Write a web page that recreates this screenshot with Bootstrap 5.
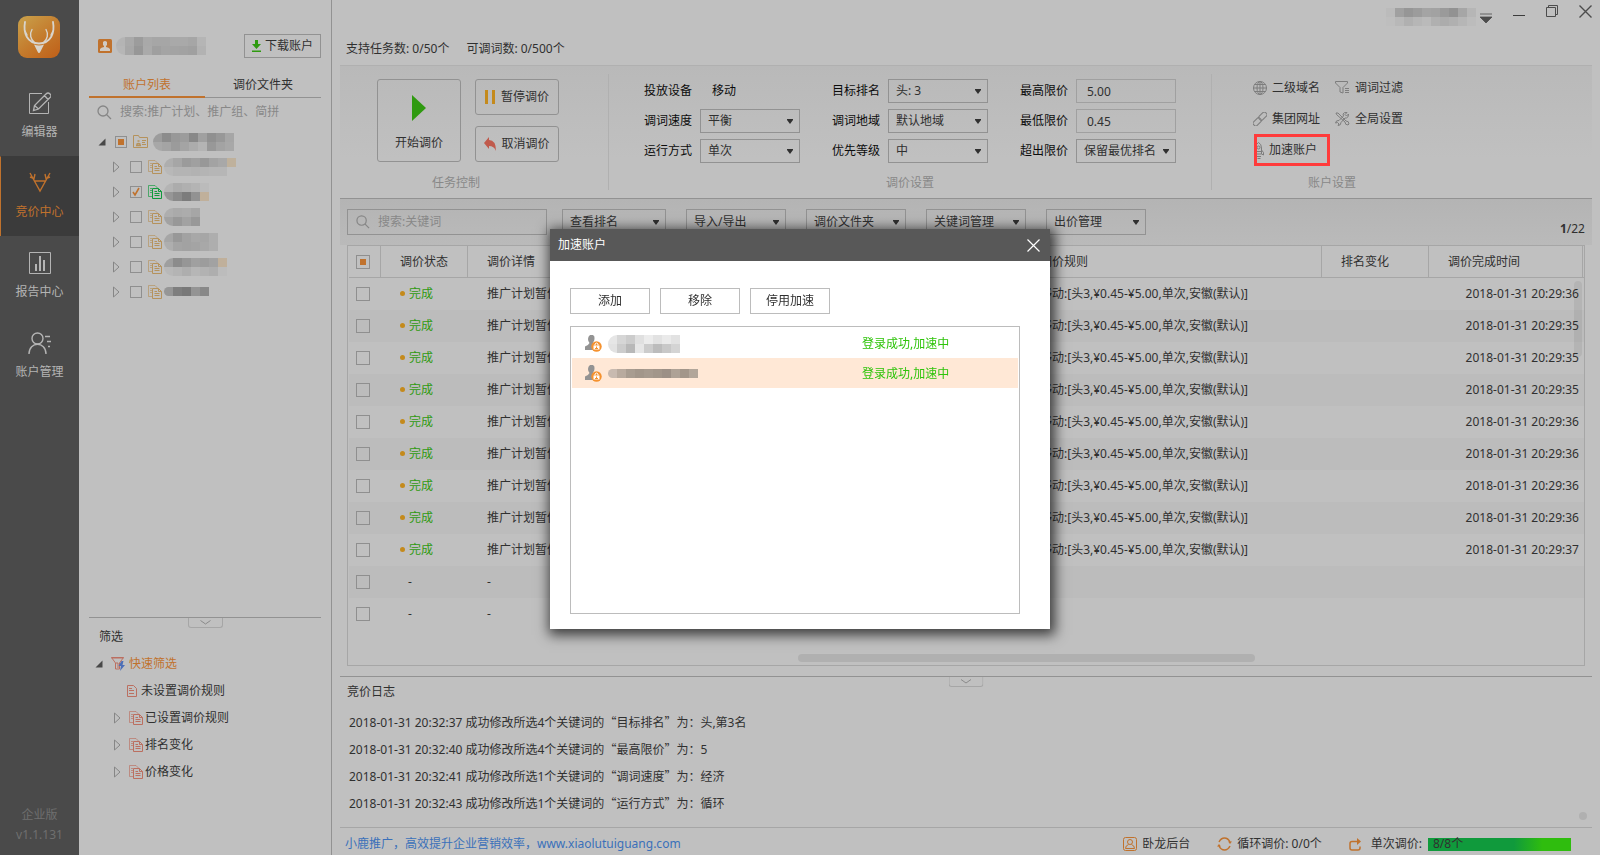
<!DOCTYPE html>
<html lang="zh-CN">
<head>
<meta charset="utf-8">
<meta name="viewport" content="width=device-width, initial-scale=1">
<title>竞价中心</title>
<link href="https://cdn.jsdelivr.net/npm/bootstrap@5.3.0/dist/css/bootstrap.min.css" rel="stylesheet">
<style>
:root{--bg:#c0c0c0;--line:#929292;--soft:#a6a6a6;--ink:#303030;--mute:#868686;--accent:#c0722d;--ok:#2f9a10}
body{font:12px/18px "Noto Sans","Noto Sans CJK SC",sans-serif;background:var(--bg);color:var(--ink)}
svg{display:block;flex:none}
svg.ln{fill:none;stroke:currentColor}
a{color:inherit;text-decoration:none}
button{font:inherit;color:inherit;background:none;border:0;padding:0}
.app{min-height:100vh}
/* left navigation */
.rail{flex:0 0 79px;background:#4a4a4a;color:#b4b4b4}
.rail-logo{height:76px;padding:16px 0 0 18px}
.rail a{height:80px;padding-top:15px;gap:7px;border:solid transparent;border-width:1px 1px 0 1px}
.rail a.on{background:#3b3b3b;color:var(--accent);border-left-color:var(--accent)}
.rail a .ic{height:24px}
.rail-ver{color:#6f6f6f;line-height:20px;padding-bottom:10px}
/* account panel */
.side{flex:0 0 253px;border-right:1px solid var(--line)}
.side-head{padding:34px 10px 0 19px}
.dl{width:77px;height:24px;border:1px solid var(--line)}
.side-tabs{margin:18px 10px 0 10px;border-bottom:1px solid var(--line)}
.side-tabs button{flex:1;height:22px;line-height:18px;padding-bottom:3px;border-bottom:2px solid transparent;margin-bottom:-1px}
.side-tabs button.on{color:var(--accent);border-color:var(--accent)}
.find{color:var(--mute);gap:8px}
.find input{background:none;border:0;padding:0;flex:1;min-width:0;outline:0;color:var(--ink)}
.find input::placeholder{color:#888;opacity:1}
.side .find{height:28px;margin:0 10px 3px 18px}
.tree{padding-left:19px}
.tree li{height:25px}
.tree li>*{flex:none}
.tree .kid{padding-left:15px}
.tree .tw{width:17px}
.chk{appearance:none;margin:0;width:12px;height:12px;border:1px solid #8f8f8f;background:none no-repeat center;display:block}
.chk.big{width:14px;height:14px}
.chk.part{background-image:linear-gradient(var(--accent),var(--accent));background-size:6px 6px}
.chk:checked{background-image:url("data:image/svg+xml,%3Csvg xmlns='http://www.w3.org/2000/svg' width='10' height='10'%3E%3Cpath d='M2 5l2 3 4-7' fill='none' stroke='%23c0722d' stroke-width='1.6'/%3E%3C/svg%3E")}
.tree .ic{width:15px;margin:0 1px 0 6px}
.tan{color:#b5925c}.grn{color:#109a3c}.red{color:#bb6f60}
.filters{margin-bottom:70px}
.split{border-top:1px solid var(--line)}
.side .split{margin:0 10px}
.grip{width:35px;height:10px;border:1px solid var(--soft);border-top:0;border-radius:0 0 3px 3px;color:var(--soft)}
.quick{padding-left:16px}
.quick li{height:27px}
.quick .kid{padding-left:19px}
.quick .top{color:var(--accent);gap:4px}
.quick .leaf{padding-left:32px}
/* work area */
.work{min-width:0;padding:0 8px}
.titlebar{height:40px;padding-top:5px;color:#4c4c4c}
.titlebar .names{margin:3px 4px 0 0}
.titlebar button+button{margin-left:21px}
.counts{height:25px;padding-left:6px;gap:17px}
.ribbon{border-top:1px solid #b0b0b0;border-bottom:1px solid var(--line);background:linear-gradient(#b9b9b9,#c0c0c0 70%);padding:8px 0}
.grp{height:116px;padding-top:5px}
.grp+.grp{border-left:1px solid #b0b0b0}
.g-task{flex:0 0 268px;padding-left:37px}
.g-task .pads{gap:14px}
.g-set{flex:0 0 603px}
.g-set .sets{gap:32px;padding-left:35px}
.grp .cap{color:#888;line-height:14px}
.g-task .cap{padding-left:55px}
.g-acc .cap{padding-left:96px}
.rb{border:1px solid var(--line);border-radius:3px;width:84px;height:36px;gap:5px}
.rb.tall{height:83px;gap:13px;padding-top:6px}
.fields{display:grid;grid-template-columns:56px 100px;grid-auto-rows:24px;row-gap:6px;align-items:center;color:#0c0c0c}
.fields select,.fields input{width:100px;height:24px;border:1px solid var(--line);border-radius:0;background-color:transparent;color:var(--ink);padding:0 0 0 7px;outline:0}
.fields input{padding-left:10px;border-color:#a0a0a0}
.fields select{appearance:none}
.caret,.fields select{background-image:url("data:image/svg+xml,%3Csvg xmlns='http://www.w3.org/2000/svg' width='6' height='5'%3E%3Cpath d='M0 0h6v1L3 5 0 1z' fill='%23303030'/%3E%3C/svg%3E");background-repeat:no-repeat;background-position:right 6px center}
.tools{display:grid;grid-template-columns:82px 82px;grid-auto-rows:31px;margin:-2px 0 0 41px}
.tools a{gap:5px}
.tools svg{color:#7d7d7d}
.tools .hot{outline:3px solid #ff3b3b;outline-offset:-3px;width:76px;height:32px;margin-left:1px;gap:5px}
.bar{height:46px;padding:10px 7px;background:linear-gradient(#b4b4b4,#bababa);gap:20px}
.bar .find{width:200px;height:26px;border:1px solid var(--line);padding-left:8px;margin-right:-5px}
.bar .drop{width:100px;height:26px;border:1px solid var(--line);text-align:left;padding-left:7px}
.bar .drop.first{width:104px}
.bar .pos{margin-bottom:-3px}
.gridwrap{margin:0 7px 10px;border:1px solid var(--soft)}
.gridbox{margin-left:1px}
.kw{table-layout:fixed;width:100%;border-collapse:separate;border-spacing:0}
.kw th{height:32px;font-weight:400;border:solid var(--soft);border-width:0 1px 1px 0;padding:0 0 0 19px}
.kw td{height:32px;padding:0 0 0 19px;white-space:nowrap;overflow:hidden}
.kw tr>:first-child{padding-left:7px}
.kw tr>.rule{padding-left:12px}
.kw tr>:last-child{padding:0}
.kw th:last-child{border-right:0}
.kw tbody tr:nth-child(even){background:#bcbcbc}
.kw .t{text-align:right;padding-right:4px}
.dot{display:inline-block;width:5px;height:5px;border-radius:50%;background:#c48a1c;vertical-align:2px;margin-right:4px}
.vthumb{top:35px;right:2px;width:8px;height:76px;border-radius:4px;background:#0000000f}
.hthumb{left:36.4%;bottom:3px;width:37%;height:8px;border-radius:4px;background:#b0b0b0}
.log{height:151px}
.log h2{font-size:12px;line-height:18px;margin:6px 0 7px 7px;font-weight:400}
.log li{height:27px;line-height:27px;padding-left:9px}
.log q{quotes:none;font-family:"Noto Sans CJK SC",sans-serif}
.log .knob{right:5px;bottom:7px;width:8px;height:8px;border-radius:50%;background:#b0b0b0}
.foot{height:28px;border-top:1px solid var(--soft);padding:5px 21px 0 5px}
.foot .lnk{color:#3a70ba}
.foot svg{color:var(--accent)}
.foot .cell{gap:5px;margin-right:27px}
.foot .cell.last{gap:9px;margin-right:6px}
.meter{width:143px;height:13px;background:linear-gradient(90deg,#109a3c 60%,#2fbd0e 80%)}
.meter span{padding-left:5px}
/* dialog */
.veil{position:fixed;inset:0;padding-top:3px;pointer-events:none}
.dlg{width:500px;background:#fff;box-shadow:2px 3px 12px 3px #000000b0;pointer-events:auto}
.dlg header{height:32px;background:#585858;color:#fff;padding:0 10px 0 8px}
.dlg .acts{gap:10px;padding:27px 20px 12px}
.dlg .acts button{width:80px;height:26px;border:1px solid #bcbcbc}
.accs{height:288px;border:1px solid #bcbcbc;margin:0 30px 15px 20px;padding:1px}
.accs li{height:30px;padding:1px 0 0 13px;gap:6px}
.accs li.on{background:#ffe8d6}
.accs .st{width:156px;color:#2ec40a}
</style>
</head>
<body>
<svg width="0" height="0" class="position-absolute" aria-hidden="true">
<symbol id="docs" viewBox="0 0 14 14"><g fill="none" stroke="currentColor"><path d="M4 11.500H.5V.5H7L9.500 3" opacity=".65"/><path d="M2 3.500h2M2 5.500h2M2 7.500h2" opacity=".65"/><path d="M4.500 3.500h6l3 3v7h-9zM10.500 3.500v3h3M6.500 6.500h2.500M6.500 8.500h5M6.500 10.500h5"/></g></symbol>
<symbol id="tri" viewBox="0 0 7 12"><path d="M.5 1v10L6 6z" fill="none" stroke="#868686"/></symbol>
<symbol id="open" viewBox="0 0 8 8"><path d="M7.500.5v7H.5z" fill="#484848"/></symbol>
<symbol id="lens" viewBox="0 0 15 15"><g fill="none" stroke="#868686" stroke-width="1.300"><circle cx="6" cy="6" r="5"/><path d="M9.500 9.500l4.500 4.500"/></g></symbol>
<symbol id="down" viewBox="0 0 11 5"><path d="M.5.5l5 3.500 5-3.500" fill="none" stroke="#8a8a8a"/></symbol>
<symbol id="user" viewBox="0 0 17 17"><path d="M5 0h3q2 1 1.500 4-.3 2.500-1.500 3.500 0 1.500 3 2.500v5H0v-3.500Q3.500 10 4.500 8 3 6.500 3 4T5 0" fill="#939393"/><circle cx="11.500" cy="11.500" r="5.200" fill="#f5922f"/><path d="M8.500 10.500h6v4h-6z" fill="#fff"/><path d="M10 10.500V9q1.500-2 3 0v1.500" fill="none" stroke="#fff"/><path d="M11.500 11.500v2M10 13.500h3" stroke="#f5922f"/></symbol>
</svg>

<div class="app d-flex">
<nav class="rail d-flex flex-column">
  <div class="rail-logo"><svg width="42" height="42" viewBox="0 0 42 42"><defs><linearGradient id="lg" x2=".8" y2="1"><stop stop-color="#c9a24c"/><stop offset=".6" stop-color="#c47a2c"/><stop offset="1" stop-color="#c0641c"/></linearGradient></defs><rect width="42" height="42" rx="9" fill="url(#lg)"/><g fill="none" stroke="#d8d4cc" stroke-width="1.800" stroke-linecap="round"><path d="M7 6C5 17 9 27 21 27.500 33 27 37 17 35 6"/><path d="M14 13.500c-3 5-1 10 2 12.500M28 13.500c3 5 1 10-2 12.500M7 15l2 4M35 15l-2 4" stroke-width="1.400"/></g><path d="M16 28.500q5 2 10 0l-3.500 7q-1.500 3-3 0z" fill="#d8d4cc"/></svg></div>
  <a href="#" class="d-flex flex-column align-items-center"><span class="ic"><svg class="ln" width="22" height="23" viewBox="0 0 22 23" stroke-width="1"><path d="M13 1.500H.5v20h19V10"/><path d="M4.500 18.500l1-5L17 2q2-2 4 0t0 3.500L9.500 17zM5.500 13.500l4 3.500M15.500 3.500l3.500 4" stroke-width="1.300"/></svg></span>编辑器</a>
  <a href="#" class="on d-flex flex-column align-items-center"><span class="ic"><svg class="ln" width="22" height="21" viewBox="0 0 22 21" stroke-width="1.400"><path d="M1 1l10 18L21 1M5.500 9h11M1 5l4 1.500 1-4.500M21 5l-4 1.500L16 2"/></svg></span>竞价中心</a>
  <a href="#" class="d-flex flex-column align-items-center"><span class="ic"><svg class="ln" width="22" height="22" viewBox="0 0 22 22"><path d="M.5.5h21v21H.5z"/><path d="M7 12v7M11 4v15M15 8v11" stroke-width="2"/></svg></span>报告中心</a>
  <a href="#" class="d-flex flex-column align-items-center"><span class="ic"><svg class="ln" width="23" height="23" viewBox="0 0 23 23" stroke-width="1.400"><circle cx="9.500" cy="6.500" r="5.500"/><path d="M1 22c0-13 17-13 17 0M17 4.500h5M19 9.500h4M20 14.500h2"/></svg></span>账户管理</a>
  <div class="rail-ver mt-auto text-center">企业版<br>v1.1.131</div>
</nav>

<aside class="side d-flex flex-column">
  <div class="side-head d-flex justify-content-between align-items-center">
    <div class="d-flex align-items-center gap-1"><svg width="14" height="14" viewBox="0 0 14 14"><rect width="14" height="14" rx="1.500" fill="#c0722d"/><path d="M5 3q2-2 4 0 .5 3-1 4v1q3 .5 4 2v2H2v-2q1-1.500 4-2V7Q4.500 6 5 3" fill="#d0cbc4"/></svg>
    <span data-mosaic="b4 a9 9c a9 a6 a6 a9 a9 a6 b5/b6 a7 97 aa 9f a4 a3 a2 a0 b2" data-round="1"></span></div>
    <button class="dl d-flex align-items-center justify-content-center gap-1"><svg width="9" height="12" viewBox="0 0 9 12"><path d="M3 0h3v4h3L4.500 9 0 4h3zM0 10.500h9V12H0z" fill="#2f9a10"/></svg>下载账户</button>
  </div>
  <div class="side-tabs d-flex"><button class="on">账户列表</button><button>调价文件夹</button></div>
  <label class="find d-flex align-items-center"><svg width="15" height="15"><use href="#lens"/></svg><input type="text" placeholder="搜索:推广计划、推广组、简拼" aria-label="搜索账户"></label>
  <ul class="tree list-unstyled mb-0" id="tree">
    <li class="d-flex align-items-center"><span class="tw"><svg width="8" height="8"><use href="#open"/></svg></span><input type="checkbox" class="chk part" aria-label="全部账户"><span class="ic tan"><svg class="ln" width="15" height="13" viewBox="0 0 15 13"><path d="M.5.500h5l1 2h8v10H.5zM9 5.500h4M9 7.500h3M9 9.500h4"/><path d="M3 10.500h5M3.500 9.500q2-2 4 0M4.500 6h2" stroke-width="1.500"/></svg></span><span class="ms-1" data-mosaic="9c 8c 98 9c 88 a0 90 98 a6/a8 a4 9b a4 ac b4 98 a3 a8" data-round="1"></span></li>
  </ul>
  <div class="filters mt-auto">
    <div class="split d-flex justify-content-center"><button class="grip d-flex align-items-center justify-content-center" aria-label="收起"><svg width="11" height="5"><use href="#down"/></svg></button></div>
    <div class="ps-3 ms-1 pb-1" id="quickhead">筛选</div>
    <ul class="quick list-unstyled mb-0" id="quick">
      <li class="top d-flex align-items-center"><svg width="8" height="8" class="me-1"><use href="#open"/></svg><svg width="14" height="14" viewBox="0 0 14 14"><path d="M.5.500h12l-4 5.500v6h-4V6z" fill="none" stroke="#bb6f60"/><path d="M.5 1h12M5 6h2v5" fill="none" stroke="#bb6f60"/><path d="M10.500 4L7.500 9h2.500l-1 5 5-6h-2.500l1-4z" fill="#4c6fb8"/></svg>快速筛选</li>
      <li class="leaf d-flex align-items-center"><svg class="ln red me-1" width="10" height="12" viewBox="0 0 10 12"><path d="M.5.500h6l3 3v8h-9zM2 3.500h3M2 5.500h5M2 8.500h5"/></svg>未设置调价规则</li>
    </ul>
  </div>
</aside>

<main class="work flex-grow-1 d-flex flex-column">
  <div class="titlebar d-flex justify-content-end align-items-start">
    <span class="names" data-mosaic="bb a0 96 9c a4 a2 9a 92 a6 b6/be b8 b0 b6 ba b0 ac b0 b6 bc"></span>
    <button class="pt-1 mt-1" aria-label="菜单"><svg width="12" height="10" viewBox="0 0 12 10"><path d="M0 1h12M0 4h12L6 10z" fill="#4c4c4c" stroke="#4c4c4c" stroke-width=".8"/></svg></button>
    <button class="pt-2" aria-label="最小化"><svg width="12" height="4"><path d="M0 2.500h12" stroke="#3c3c3c"/></svg></button>
    <button aria-label="还原"><svg class="ln" width="12" height="12" viewBox="0 0 12 12"><path d="M.5 2.500h9v9h-9zM2.500 2V.5h9v9H10"/></svg></button>
    <button aria-label="关闭"><svg class="ln" width="13" height="13" viewBox="0 0 13 13" stroke-width="1.400"><path d="M.5.5l12 12m0-12l-12 12"/></svg></button>
  </div>
  <div class="counts d-flex"><span>支持任务数: 0/50个</span><span>可调词数: 0/500个</span></div>

  <section class="ribbon d-flex">
    <div class="grp g-task d-flex flex-column">
      <div class="pads d-flex">
        <button class="rb tall d-flex flex-column align-items-center justify-content-center"><svg width="14" height="26" viewBox="0 0 14 26"><path d="M0 0v26l14-13z" fill="#2f9a10"/></svg>开始调价</button>
        <div class="d-flex flex-column justify-content-between">
          <button class="rb d-flex align-items-center justify-content-center"><svg width="11" height="14" viewBox="0 0 11 14"><path d="M0 0h3v14H0zM7 0h3v14H7z" fill="#c48a1c"/></svg>暂停调价</button>
          <button class="rb d-flex align-items-center justify-content-center"><svg width="12" height="14" viewBox="0 0 12 14"><path d="M5 0v3q7 0 7 11Q10 9 5 9v3L0 6z" fill="#c05a4c"/></svg>取消调价</button>
        </div>
      </div>
      <div class="cap mt-auto">任务控制</div>
    </div>
    <div class="grp g-set d-flex flex-column">
      <div class="sets d-flex">
        <div class="fields"><span>投放设备</span><span class="ps-2 ms-1">移动</span>
          <label for="speed">调词速度</label><select id="speed"><option>平衡</option></select>
          <label for="mode">运行方式</label><select id="mode"><option>单次</option></select></div>
        <div class="fields"><label for="rank">目标排名</label><select id="rank"><option>头: 3</option></select>
          <label for="area">调词地域</label><select id="area"><option>默认地域</option></select>
          <label for="prio">优先等级</label><select id="prio"><option>中</option></select></div>
        <div class="fields"><label for="max">最高限价</label><input id="max" value="5.00">
          <label for="min">最低限价</label><input id="min" value="0.45">
          <label for="over">超出限价</label><select id="over"><option>保留最优排名</option></select></div>
      </div>
      <div class="cap mt-auto text-center">调价设置</div>
    </div>
    <div class="grp g-acc flex-grow-1 d-flex flex-column pt-0">
      <div class="tools">
        <a href="#" class="d-flex align-items-center"><svg class="ln" width="14" height="14" viewBox="0 0 14 14"><circle cx="7" cy="7" r="6.500"/><ellipse cx="7" cy="7" rx="3" ry="6.500"/><path d="M7 0v14M0 7h14M1.500 3.500h11M1.500 10.500h11"/></svg>二级域名</a>
        <a href="#" class="d-flex align-items-center"><svg class="ln" width="15" height="13" viewBox="0 0 15 13"><path d="M.5.5h12v1.500L8 6.500V12L5 11V6.500L.5 2zM10 7.500h4M10 9.500h4M10 11.500h4"/></svg>调词过滤</a>
        <a href="#" class="d-flex align-items-center"><svg class="ln" width="14" height="14" viewBox="0 0 14 14"><g transform="rotate(-45 7 7)"><rect x="-1.500" y="4.500" width="9" height="5" rx="2"/><rect x="6.500" y="4.500" width="9" height="5" rx="2"/></g></svg>集团网址</a>
        <a href="#" class="d-flex align-items-center"><svg class="ln" width="15" height="14" viewBox="0 0 15 14"><path d="M1 1h2l8 8q3 0 3 3l-1 1q-3 0-3-3L1.500 2.500zM13.500 2l-2 2-1.500-1.500L12 .5Q9 0 8 2l.5 2L4 8.500Q1 8 .5 11l2-.5 1.500 1.500-1 1.500q3 0 3-3L10 6q3.500.5 3.500-4z"/></svg>全局设置</a>
        <a href="#" class="hot d-flex align-items-center"><svg class="ln" width="10" height="17" viewBox="0 0 10 17"><path d="M1.500 12V6q0-4 3-5.500Q7.500 2 7.500 6v6zM7.500 8l2 2.500v2.500l-2-1M3 14.500h4M3.500 16.500h3M1.500 9.500h6"/><circle cx="4.500" cy="5.500" r="1.500"/></svg>加速账户</a>
      </div>
      <div class="cap mt-auto">账户设置</div>
    </div>
  </section>

  <div class="bar d-flex">
    <label class="find d-flex align-items-center"><svg width="14" height="14"><use href="#lens"/></svg><input type="text" placeholder="搜索:关键词" aria-label="搜索关键词"></label>
    <button class="drop caret first">查看排名</button><button class="drop caret">导入/导出</button><button class="drop caret">调价文件夹</button><button class="drop caret">关键词管理</button><button class="drop caret">出价管理</button>
    <span class="pos ms-auto align-self-end"><b>1</b>/22</span>
  </div>

  <div class="gridwrap flex-grow-1 position-relative"><div class="gridbox">
    <table class="kw"><colgroup><col style="width:32px"><col style="width:87px"><col style="width:560px"><col><col style="width:107px"><col style="width:154px"><col style="width:1px"></colgroup>
    <thead><tr><th><input type="checkbox" class="chk big part" aria-label="全选"></th><th>调价状态</th><th>调价详情</th><th class="rule">调价规则</th><th>排名变化</th><th>调价完成时间</th><th></th></tr></thead>
    <tbody id="rows"></tbody></table></div>
    <div class="vthumb position-absolute"></div><div class="hthumb position-absolute"></div>
  </div>

  <section class="log split position-relative">
    <button class="grip position-absolute top-0 start-50 translate-middle-x d-flex align-items-center justify-content-center" aria-label="收起日志"><svg width="11" height="5"><use href="#down"/></svg></button>
    <h2>竞价日志</h2>
    <ul class="list-unstyled mb-0">
      <li>2018-01-31 20:32:37 成功修改所选4个关键词的<q>“目标排名”</q>为：头,第3名</li>
      <li>2018-01-31 20:32:40 成功修改所选4个关键词的<q>“最高限价”</q>为：5</li>
      <li>2018-01-31 20:32:41 成功修改所选1个关键词的<q>“调词速度”</q>为：经济</li>
      <li>2018-01-31 20:32:43 成功修改所选1个关键词的<q>“运行方式”</q>为：循环</li>
    </ul>
    <div class="knob position-absolute"></div>
  </section>
  <footer class="foot d-flex align-items-center">
    <a class="lnk me-auto" href="#">小鹿推广，高效提升企业营销效率，www.xiaolutuiguang.com</a>
    <div class="cell d-flex align-items-center"><svg class="ln" width="14" height="14" viewBox="0 0 14 14"><rect x=".5" y=".5" width="13" height="13" rx="2"/><circle cx="7" cy="5" r="2.500"/><path d="M2.500 11.500q0-3 3-4M11.500 11.500q0-3-3-4M2.500 11.500h9"/></svg>卧龙后台</div>
    <div class="cell d-flex align-items-center"><svg class="ln" width="15" height="14" viewBox="0 0 15 14" stroke-width="1.500"><path d="M2 5q2-4 5.500-4T13 5M13 9q-2 4-5.500 4T2 9"/><path d="M11 4.500h4L13 7zM0 9.500h4L2 7z" fill="currentColor" stroke="none"/></svg>循环调价: 0/0个</div>
    <div class="cell last d-flex align-items-center"><svg class="ln" width="13" height="13" viewBox="0 0 13 13" stroke-width="1.500"><path d="M9 3.500H3q-2 0-2 2V10q0 2 2 2h6q2 0 2-2V8.500"/><path d="M8 0v7l4-3.500z" fill="currentColor" stroke="none"/></svg>单次调价:</div>
    <div class="meter d-flex align-items-center"><span>8/8个</span></div>
  </footer>
</main>
</div>

<div class="veil d-flex align-items-center justify-content-center">
  <div class="dlg" role="dialog" aria-labelledby="dt">
    <header class="d-flex align-items-center justify-content-between"><span id="dt">加速账户</span><button aria-label="关闭"><svg class="ln" width="13" height="13" viewBox="0 0 13 13" stroke-width="1.200"><path d="M.5.5l12 12m0-12l-12 12"/></svg></button></header>
    <div class="acts d-flex"><button>添加</button><button>移除</button><button>停用加速</button></div>
    <ul class="accs list-unstyled">
      <li class="d-flex align-items-center"><svg width="17" height="17"><use href="#user"/></svg><span data-mosaic="e6 d6 cc e0 ec e2 ea e2/e2 cc b8 e6 cc bc c8 d4" data-round="1"></span><span class="st ms-auto">登录成功,加速中</span></li>
      <li class="on d-flex align-items-center"><svg width="17" height="17"><use href="#user"/></svg><span data-mosaic="c8bab0 b8aa9e a89c90 a2968a a69a8e a2968a 9c9086 aea296 a2968a b2a69a" data-round="1"></span><span class="st ms-auto">登录成功,加速中</span></li>
    </ul>
  </div>
</div>

<script src="https://cdn.jsdelivr.net/npm/bootstrap@5.3.0/dist/js/bootstrap.bundle.min.js"></script>
<script>
// account tree: masked names are rows of 9px tone cells
const accounts = [
  'aeaeae a6a6a6 9b9b9b a0a0a0 989898 a3a3a3 a8a8a8 bfb19c/b8 b4 b4 b2 b4 b6 b6 c0',
  'b4 ac b0 b4 bb/969696 8a8a8a 7c7c7c 929292 c0b09b',
  'ae aa ac a6/a2 98 a2 98',
  'a6 98 a2 a8 a6 ae/ae a4 a2 a4 a8 ae',
  '9f9f9f 8c8c8c 969696 a0a0a0 9c9c9c a2a2a2 c0b09b/b8 b4 ae b6 b2 ae bc',
  '969696 7e7e7e 787878 949494 888888'];
document.getElementById('tree').insertAdjacentHTML('beforeend', accounts.map((m, i) =>
  `<li class="kid d-flex align-items-center"><span class="tw"><svg width="7" height="12"><use href="#tri"/></svg></span>
  <input type="checkbox" class="chk" aria-label="账户${i + 1}" ${i === 1 ? 'checked' : ''}><span class="ic ${i === 1 ? 'grn' : 'tan'}"><svg width="14" height="14"><use href="#docs"/></svg></span>
  <span data-mosaic="${m}" data-round="1"></span></li>`).join(''));
document.getElementById('quick').insertAdjacentHTML('beforeend', ['已设置调价规则', '排名变化', '价格变化'].map(t =>
  `<li class="kid d-flex align-items-center"><svg width="7" height="12" class="me-2"><use href="#tri"/></svg><svg class="red" style="margin-right:2px" width="14" height="14"><use href="#docs"/></svg>${t}</li>`).join(''));
const secs = [36, 35, 35, 35, 36, 36, 36, 36, 37];
const box = '<input type="checkbox" class="chk big" aria-label="选择">';
document.getElementById('rows').innerHTML = secs.map(s =>
  `<tr><td>${box}</td><td><span style="color:var(--ok)"><i class="dot"></i>完成</span></td><td>推广计划暂停</td><td class="rule">移动:[头3,¥0.45-¥5.00,单次,安徽(默认)]</td><td></td><td class="t">2018-01-31 20:29:${s}</td><td></td></tr>`).join('') +
  `<tr><td>${box}</td><td><span class="ms-2">-</span></td><td>-</td><td></td><td></td><td></td><td></td></tr>`.repeat(2);
document.querySelectorAll('[data-mosaic]').forEach(el => {
  const rows = el.dataset.mosaic.split('/').map(r => r.split(' '));
  const w = rows[0].length * 9, h = rows.length * 9;
  const cells = rows.map((r, y) => r.map((c, x) =>
    `<rect x="${x * 9}" y="${y * 9}" width="9" height="9" fill="#${c.length === 2 ? c.repeat(3) : c}"/>`).join('')).join('');
  const clip = el.dataset.round ? ` style="border-radius:${h / 2}px 0 0 ${h / 2}px"` : '';
  el.innerHTML = `<svg width="${w}" height="${h}" shape-rendering="crispEdges"${clip}>${cells}</svg>`;
});
</script>
</body>
</html>
